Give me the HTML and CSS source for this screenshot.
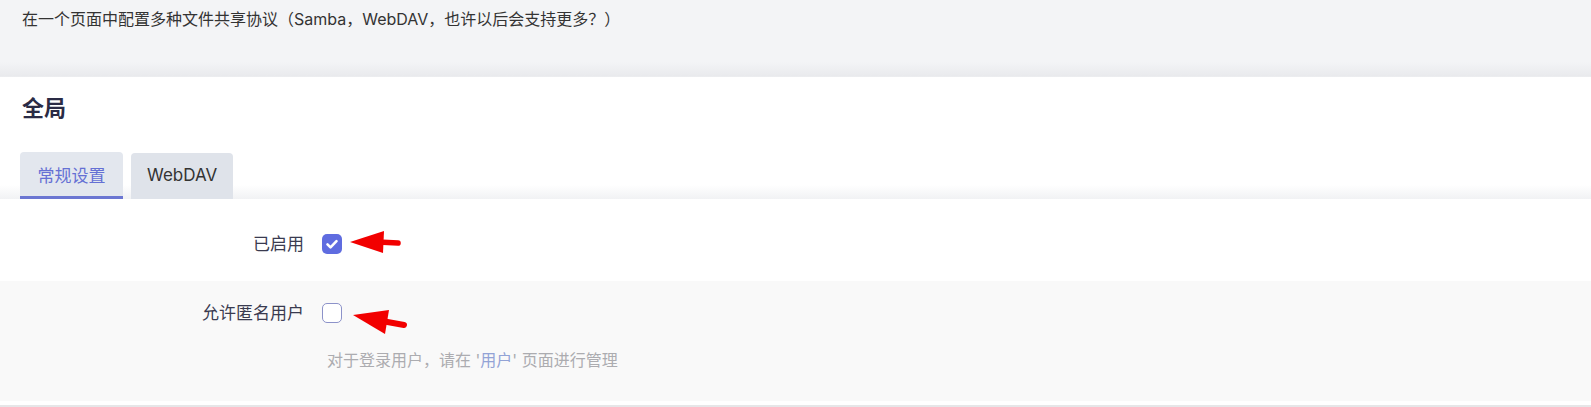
FILE: index.html
```html
<!DOCTYPE html>
<html lang="zh-CN">
<head>
    <meta charset="UTF-8">
    <title>文件共享</title>
    <link rel="stylesheet" href="styles.css">
</head>
<body>
<header class="intro">
    <p>在一个页面中配置多种文件共享协议（Samba，WebDAV，也许以后会支持更多？）</p>
</header>
<section class="card">
    <h2>全局</h2>
    <nav class="tabs">
        <span class="tab active">常规设置</span>
        <span class="tab">WebDAV</span>
    </nav>
    <div class="form">
        <div class="row first">
            <label class="label">已启用</label>
            <div class="control">
                <span class="checkbox checked">
                    <svg viewBox="0 0 20 20" width="20" height="20"><path d="M5.5 10.3l3 3 6-6.2" fill="none" stroke="#fff" stroke-width="2.6" stroke-linecap="round" stroke-linejoin="round"/></svg>
                </span>
            </div>
        </div>
        <div class="row alt">
            <label class="label">允许匿名用户</label>
            <div class="control">
                <span class="checkbox"></span>
                <p class="help">对于登录用户，请在 '<a href="#">用户</a>' 页面进行管理</p>
            </div>
        </div>
    </div>
    <div class="rule"></div>
</section>
<!-- annotation arrows drawn over the screenshot -->
<svg class="marks" width="1591" height="407" viewBox="0 0 1591 407">
    <polygon points="350,242 384,231 383,253" fill="#f20000"/>
    <line x1="378" y1="242" x2="398" y2="243" stroke="#f20000" stroke-width="5.5" stroke-linecap="round"/>
    <polygon points="353,315 389,310 385,334" fill="#f20000"/>
    <line x1="382" y1="321" x2="404" y2="325" stroke="#f20000" stroke-width="6" stroke-linecap="round"/>
</svg>
</body>
</html>
```

FILE: styles.css
```css
html, body {
    margin: 0;
    padding: 0;
    background: #fff;
    font-family: Inter, "Noto Sans CJK SC", sans-serif;
    color: #35364d;
}

body {
    position: relative;
    overflow: hidden;
}

header.intro {
    height: 77px;
    box-sizing: border-box;
    padding: 9px 22px 0 22px;
    background: linear-gradient(to bottom, #f3f4f6 0, #f3f4f6 62px, #e9eaed 76px, #eeeff1 77px);
}

header.intro p {
    margin: 0;
    font-size: 16px;
    line-height: 21px;
    color: #333;
}

section.card h2 {
    margin: 0;
    padding: 17px 0 0 22px;
    font-size: 22px;
    line-height: 28px;
    font-weight: 700;
    color: #2a2b45;
}

nav.tabs {
    display: flex;
    gap: 8px;
    margin-top: 30px;
    padding: 0 20px;
    height: 47px;
    background: linear-gradient(to bottom, #fff 0, #fff 33px, #f1f2f4 47px);
}

.tab {
    display: flex;
    align-items: center;
    justify-content: center;
    padding: 0 16px;
    height: 47px;
    box-sizing: border-box;
    font-size: 17px;
    color: #333;
    background: #dfe3ea;
    border-radius: 4px 4px 0 0;
}

.tab.active {
    min-width: 103px;
    color: #6570d4;
    background: #e3e7ee;
    border-bottom: 3px solid #6b76d2;
}

.tab:not(.active) {
    min-width: 101px;
    margin-top: 1px;
    height: 46px;
    padding-bottom: 2px;
}

.row {
    display: grid;
    grid-template-columns: 304px 1fr;
    column-gap: 18px;
}

.row.first {
    padding: 35px 0 27px 0;
}

.row.alt {
    padding: 22px 0 31px 0;
    background: #f9f9f9;
}

.label {
    text-align: right;
    font-size: 17px;
    line-height: 20px;
    color: #3a3b50;
}

.checkbox {
    display: block;
    width: 20px;
    height: 20px;
    box-sizing: border-box;
    border: 1.5px solid #8c92c9;
    border-radius: 5px;
    background: #fff;
}

.checkbox.checked {
    border: none;
    background: #5f6ce0;
}

.checkbox svg {
    display: block;
}

.help {
    margin: 27px 0 0 5px;
    font-size: 16px;
    line-height: 20px;
    color: #acacb0;
}

.help a {
    color: #93a3d6;
    text-decoration: none;
}

.rule {
    margin-top: 4px;
    height: 2px;
    background: #e6e6e8;
}

svg.marks {
    position: absolute;
    top: 0;
    left: 0;
    pointer-events: none;
}
```
